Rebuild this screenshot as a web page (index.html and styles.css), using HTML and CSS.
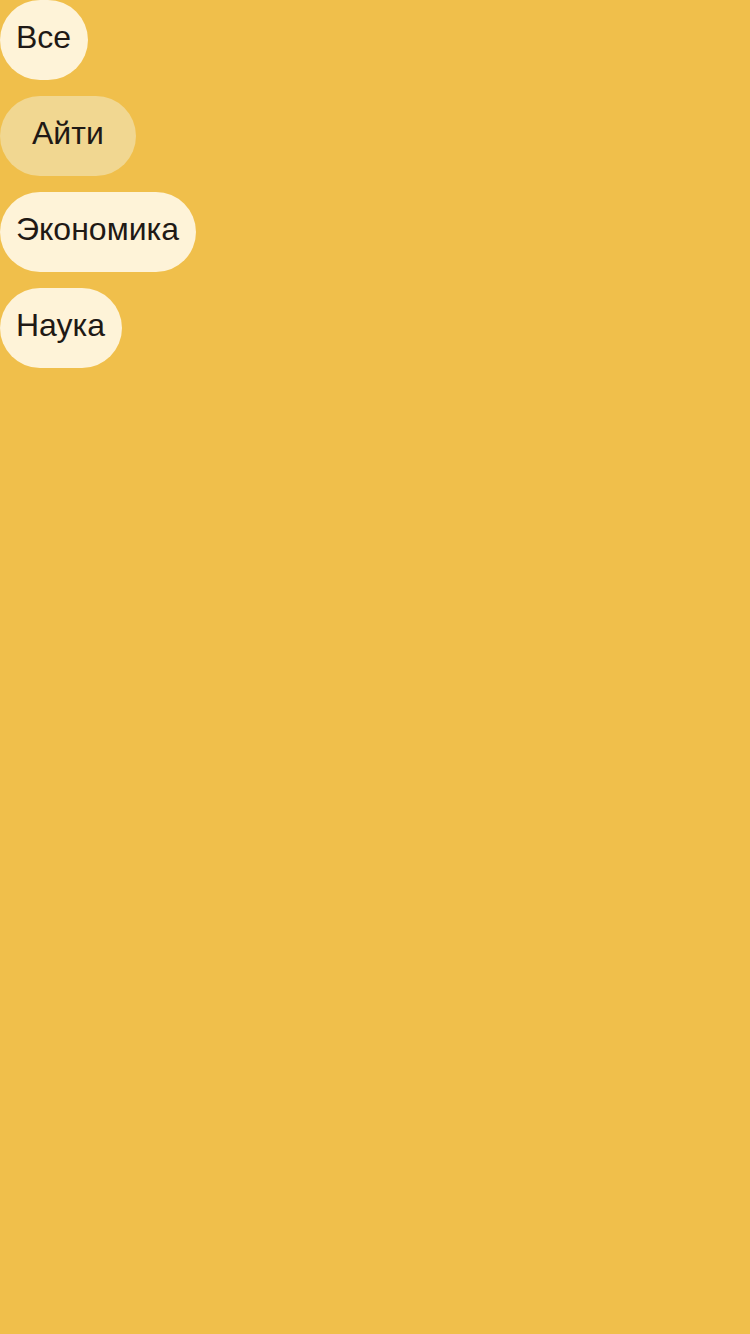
FILE: index.html
```html
<!DOCTYPE html>
<html lang="ru">
<head>
<meta charset="utf-8">
<link rel="stylesheet" href="styles.css">
</head>
<body>
<div class="chips">
  <div class="chip">Все</div>
  <div class="chip chip--active">Айти</div>
  <div class="chip">Экономика</div>
  <div class="chip">Наука</div>
</div>
</body>
</html>
```
FILE: styles.css
```css
html, body {
  margin: 0;
  padding: 0;
  background: #f0bf4b;
  height: 100%;
}
body {
  font-family: "Liberation Sans", Arial, sans-serif;
}
.chips {
  display: flex;
  flex-direction: column;
  align-items: flex-start;
  gap: 16px;
}
.chip {
  height: 80px;
  box-sizing: border-box;
  display: flex;
  align-items: center;
  padding: 0 17px 6px 16px;
  border-radius: 40px;
  background: #fef3d8;
  color: #1f1915;
  font-size: 32px;
}
.chip--active {
  padding: 0 32px 6px;
  background: #f1d791;
}
```
